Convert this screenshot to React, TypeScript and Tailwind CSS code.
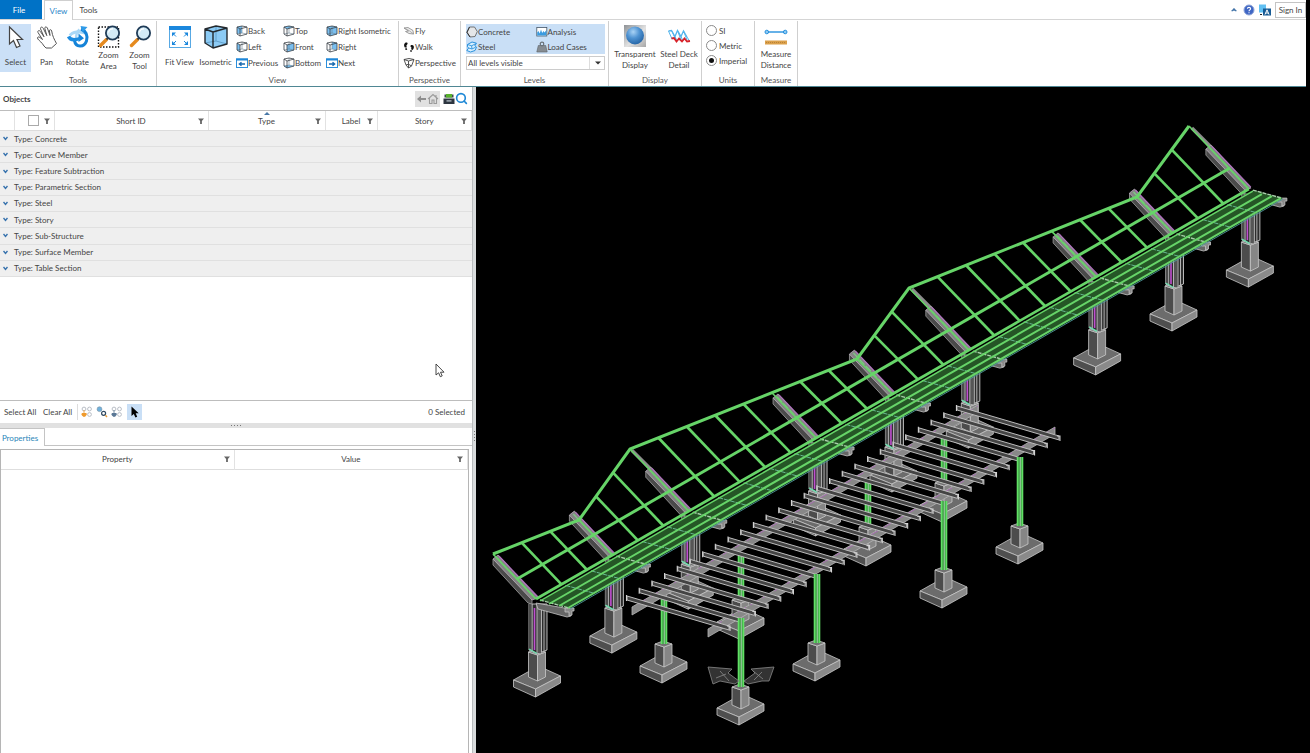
import React, { ReactNode } from 'react';
import { Search } from 'lucide-react';

type Pt = [number, number];

const pts = (list: Pt[]) => list.map((p) => p.join(',')).join(' ');

/* ---------- icons ---------- */

const cubeFaces: Record<string, string> = {
  back: '1,2 6,1 6,8 1,9',
  left: '1,2 4,4 4,11 1,9',
  top: '1,2 6,1 11,2 4,4',
  front: '4,4 11,2 11,9 4,11',
  bottom: '1,9 6,8 11,9 4,11',
  right: '6,1 11,2 11,9 6,8',
  iso: '1,2 6,1 11,2 11,9 4,11 1,9',
};

function Cube({ face }: { face: string }) {
  return (
    <svg width="12" height="12" viewBox="0 0 12 12" className="shrink-0">
      <polygon points={cubeFaces[face]} fill="#79bff0" />
      <path d="M1 9L6 8L11 9M6 8V1" fill="none" stroke="#6c8496" strokeWidth="0.6" />
      <path
        d="M1 2L6 1L11 2V9L4 11L1 9ZM1 2L4 4L11 2M4 4V11"
        fill="none"
        stroke="#3a4046"
        strokeWidth="0.8"
        strokeLinejoin="round"
      />
    </svg>
  );
}

const IsometricIcon = () => (
  <svg width="24" height="26" viewBox="0 0 24 26">
    <polygon points="1,5 12,2 23,4 23,20 9,24 1,19" fill="#8ccbf5" />
    <path d="M12 2V17M1 19L12 17L23 20" fill="none" stroke="#5f9cc6" strokeWidth="0.9" />
    <path
      d="M1 5L12 2L23 4V20L9 24L1 19ZM1 5L9 8L23 4M9 8V24"
      fill="none"
      stroke="#23292e"
      strokeWidth="1.4"
      strokeLinejoin="round"
    />
  </svg>
);

function WindowArrow({ flip = false }: { flip?: boolean }) {
  return (
    <svg width="12" height="12" viewBox="0 0 12 12" className="shrink-0">
      <rect x="0.5" y="2" width="11" height="8.5" fill="#fff" stroke="#2b8fdc" />
      <rect x="0" y="1.5" width="12" height="2" fill="#1d86d8" />
      <path
        d={flip ? 'M3 7H8M6.5 5.2L8.7 7L6.5 8.8' : 'M9 7H4M5.5 5.2L3.3 7L5.5 8.8'}
        fill="none"
        stroke="#1668b0"
        strokeWidth="1.3"
      />
    </svg>
  );
}

function Funnel() {
  return (
    <svg width="6" height="6" viewBox="0 0 6 6" className="shrink-0">
      <path d="M0 0.5H6L3.9 3V6H2.1V3Z" fill="#666" />
    </svg>
  );
}

function Magnifier({ area = false }: { area?: boolean }) {
  return (
    <svg width="24" height="24" viewBox="0 0 24 24">
      {area && <rect x="1.5" y="2" width="20" height="20" fill="none" stroke="#111" strokeWidth="1.4" strokeDasharray="1.5 1.5" />}
      <path d="M9.5 14.5L3.5 20.5" stroke="#e58a1f" strokeWidth="3.4" strokeLinecap="round" />
      <path d="M11.5 12.5L9.5 14.5" stroke="#444" strokeWidth="2" />
      <circle cx="15.5" cy="8" r="6.6" fill="#d3ebf7" stroke="#1f3b57" strokeWidth="1.8" />
      <path d="M11.5 7.5A4.2 4.2 0 0 1 16 3.8" stroke="#fff" strokeWidth="1.2" fill="none" />
    </svg>
  );
}

const SelectIcon = () => (
  <svg width="24" height="26" viewBox="0 0 24 26">
    <path d="M5.5 3V20L9.5 16.5L12.5 23.5L16 22L13 15.5H18.5Z" fill="#fff" stroke="#444" strokeWidth="1.2" />
  </svg>
);

const PanIcon = () => (
  <svg width="24" height="26" viewBox="0 0 24 26">
    <path
      d="M9 22C7 18.5 4.5 17 2.8 15C1.8 13 3.6 12.2 5 13.5L7.5 15.5L3 8.5C2.2 6.7 4.2 5.8 5.3 7.4L9 12.8L5.6 5C5 3 7.2 2.4 8.2 4.2L11.8 11.6L9.8 4.4C9.6 2.6 11.6 2.4 12.4 4L15 11.5L14.4 6.8C14.6 5.2 16.4 5.4 16.7 7C17.5 12 19 15 21.5 19.5L16.5 24H11Z"
      fill="#fff"
      stroke="#555"
      strokeWidth="1"
      strokeLinejoin="round"
    />
  </svg>
);

const RotateIcon = () => (
  <svg width="24" height="26" viewBox="0 0 24 26">
    <path d="M4 11.5C6 8 14 6.5 21 9.5" fill="none" stroke="#a9d8f7" strokeWidth="3" />
    <path d="M8.5 16.5C9.5 23.5 18 24 20.5 17C22.2 12 20 7 15 5" fill="none" stroke="#1583d8" strokeWidth="3" />
    <path d="M10 15C10 10 11 7.5 13.5 5.5" fill="none" stroke="#a9d8f7" strokeWidth="2.4" />
    <path d="M12.5 9.5V18L18 14.2Z" fill="#1583d8" />
    <path d="M14.5 2L21.5 3L16.5 8.5Z" fill="#2f9be8" />
    <path d="M2.5 12.5C4 16 8 16.5 14 14.5" fill="none" stroke="#1c8ce0" strokeWidth="3.4" />
  </svg>
);

const FitIcon = () => (
  <svg width="24" height="26" viewBox="0 0 24 26">
    <rect x="1.5" y="3.5" width="21" height="20" fill="#fff" stroke="#58a9e4" />
    <rect x="1" y="2" width="22" height="4" fill="#1a87dd" />
    <path d="M4 8.5H8L4 12.5ZM20 8.5H16L20 12.5ZM4 21H8L4 17ZM20 21H16L20 17Z" fill="#1a87dd" />
    <path d="M5 9.5L8 12.5M19 9.5L16 12.5M5 20L8 17M19 20L16 17" stroke="#1a87dd" strokeWidth="1" />
  </svg>
);

const FlyIcon = () => (
  <svg width="12" height="12" viewBox="0 0 12 12" className="shrink-0">
    <path d="M1 3L5 2.5L10 5.5L10.5 9L6 8.5L2.5 6.5L5.5 6Z" fill="#eee" stroke="#888" strokeWidth="0.8" />
    <path d="M1 3L6 5.5L10.5 9" fill="none" stroke="#999" strokeWidth="0.7" />
  </svg>
);

const WalkIcon = () => (
  <svg width="12" height="12" viewBox="0 0 12 12" className="shrink-0">
    <path d="M2 2C3.8 1 5 2 4.5 3L3.4 4.5L3.8 6.4L1.8 6.6C0.8 4.8 0.8 3 2 2ZM2 7.4L3.9 7.2L4.2 8.7L2.6 8.9Z" fill="#111" />
    <path d="M7.6 4.4C9.6 3.4 11.4 4.6 10.8 7L9.8 9L8 8.2C8.8 7 8.4 6 7.4 5.6ZM7.6 9L9.3 9.8L8.2 11L7 10.3Z" fill="#111" />
  </svg>
);

const PerspectiveIcon = () => (
  <svg width="12" height="12" viewBox="0 0 12 12" className="shrink-0">
    <path d="M1 2.5L6 1.5L11 2.5L8.5 9L5.5 11L3 8ZM1 2.5L5.5 4L11 2.5M5.5 4V11M3 8L5.5 7.2L8.5 9" fill="none" stroke="#444" strokeWidth="0.9" />
  </svg>
);

const ConcreteIcon = () => (
  <svg width="12" height="12" viewBox="0 0 12 12" className="shrink-0">
    <path d="M3.5 1L8.5 1L11.3 5.5L9 10.5L4 11L0.8 6.5Z" fill="#e4e6e8" stroke="#666" strokeWidth="0.9" />
    <path d="M3.5 1L1 6.2L4 11" fill="none" stroke="#333" strokeWidth="1" />
  </svg>
);

const SteelIcon = () => (
  <svg width="12" height="12" viewBox="0 0 12 12" className="shrink-0">
    <path d="M1.5 3.5L6 1L10.5 2.2L8.8 4.8L10.5 6L9 9.5L4.5 11L0.8 9.5L2.6 7L1.5 5.8Z" fill="#d9effd" stroke="#2a92dd" strokeWidth="1" />
    <path d="M1.5 3.5L5.6 4.8L10 2.6M2.6 7L6 8L9.6 6.2M5.6 4.8L6 8" fill="none" stroke="#2a92dd" strokeWidth="0.9" />
  </svg>
);

const AnalysisIcon = () => (
  <svg width="12" height="12" viewBox="0 0 12 12" className="shrink-0">
    <rect x="0.8" y="1.5" width="10" height="8.5" fill="#fff" stroke="#456" strokeWidth="0.8" />
    <path d="M1.2 9.6V6.5L2.5 5L3.7 7.5L5 3.5L6.2 7L7.5 5L8.6 6.5L10.4 4V9.6Z" fill="#3a9be0" />
  </svg>
);

const LoadIcon = () => (
  <svg width="12" height="12" viewBox="0 0 12 12" className="shrink-0">
    <path d="M2.3 4.5H9.7L11.2 11H0.8Z" fill="#868c92" stroke="#5b6268" strokeWidth="0.6" />
    <circle cx="6" cy="3" r="1.8" fill="none" stroke="#6b7278" strokeWidth="1.2" />
  </svg>
);

const SphereIcon = () => (
  <svg width="24" height="24" viewBox="0 0 24 24">
    <defs>
      <radialGradient id="ball" cx="0.4" cy="0.3" r="0.7">
        <stop offset="0" stopColor="#a9d3f5" />
        <stop offset="0.5" stopColor="#4f93d2" />
        <stop offset="1" stopColor="#2767a8" />
      </radialGradient>
      <linearGradient id="plate" x1="0" y1="0" x2="1" y2="1">
        <stop offset="0" stopColor="#8e9296" />
        <stop offset="0.55" stopColor="#e2e2e2" />
        <stop offset="1" stopColor="#a7a7a7" />
      </linearGradient>
    </defs>
    <rect x="1" y="1" width="22" height="22" fill="url(#plate)" />
    <circle cx="12" cy="11.5" r="9" fill="url(#ball)" />
  </svg>
);

const DeckIcon = () => (
  <svg width="24" height="24" viewBox="0 0 24 24">
    <path d="M1.5 7L4.5 6.5L8 12.5L10.5 6.5L14 12.5L16.5 7L20 13" fill="none" stroke="#55b5ec" strokeWidth="1.3" />
    <path d="M1.5 7L5 15M4.5 6.5L8.5 15M8 12.5L10 17M10.5 6.5L14 16M14 12.5L16 17M16.5 7L20 16M20 13L22.5 17" fill="none" stroke="#55b5ec" strokeWidth="1" />
    <path d="M4.5 14.5L7 14L9.5 17.5L12 14.5L15 17.5L17.5 14.5L20 17.5L23 17" fill="none" stroke="#d8232a" strokeWidth="1.8" />
  </svg>
);

const MeasureIcon = () => (
  <svg width="24" height="24" viewBox="0 0 24 24">
    <path d="M2.5 8H21.5" stroke="#2590de" strokeWidth="1.4" />
    <circle cx="2.8" cy="8" r="1.8" fill="#8fcaf3" stroke="#2590de" />
    <circle cx="21.2" cy="8" r="1.8" fill="#8fcaf3" stroke="#2590de" />
    <rect x="1" y="16.5" width="22" height="4" fill="#dba04b" />
    <path d="M2 18.5H22" stroke="#b98337" strokeDasharray="1 1" />
  </svg>
);

const BallsIcon = ({ accent }: { accent: string }) => (
  <svg width="12" height="12" viewBox="0 0 12 12">
    <circle cx="3" cy="3" r="1.9" fill="#fff" stroke="#b9bec6" />
    <circle cx="8.5" cy="3" r="1.9" fill="#fff" stroke="#b9bec6" />
    <circle cx="8.5" cy="8.5" r="1.9" fill="#fff" stroke="#b9bec6" />
    <path d="M1 7.5A2.2 2.2 0 1 0 5.2 7.5Z" fill={accent} stroke={accent} />
    <path d="M3 4V8" stroke={accent} strokeWidth="0.8" />
  </svg>
);

const LinkedIcon = () => (
  <svg width="12" height="12" viewBox="0 0 12 12">
    <circle cx="3.5" cy="3.2" r="2.4" fill="#6fb1dc" stroke="#7d98ad" strokeWidth="0.7" />
    <circle cx="7.6" cy="7.3" r="2" fill="#fff" stroke="#2f4a63" strokeWidth="1.2" />
    <path d="M9.4 9.2L11 11" stroke="#e39a3a" strokeWidth="1.4" />
  </svg>
);

/* ---------- ribbon ---------- */

function Group({ label, className, children }: { label: string; className: string; children: ReactNode }) {
  return (
    <section aria-label={label} className={`flex flex-col shrink-0 border-r border-[#cfcfcf] ${className}`}>
      <div className="flex flex-1">{children}</div>
      <div className="h-3 text-center leading-[12px] text-[#555]">{label}</div>
    </section>
  );
}

function BigButton({ icon, lines, active = false, className = 'w-[31px]' }: { icon: ReactNode; lines: string[]; active?: boolean; className?: string }) {
  return (
    <button className={`flex flex-col items-center h-12 ${className} ${active ? 'bg-[#cbe0f7]' : ''}`}>
      <span className="flex h-[26px] items-center justify-center">{icon}</span>
      <span className={`flex flex-1 flex-col justify-center text-center leading-[11px] whitespace-nowrap ${lines.length === 1 ? 'pt-[2px]' : ''}`}>
        {lines.map((l) => (
          <span key={l}>{l}</span>
        ))}
      </span>
    </button>
  );
}

function SmallButton({ icon, label, className = 'h-4' }: { icon: ReactNode; label: string; className?: string }) {
  return (
    <button className={`flex items-center whitespace-nowrap ${className}`}>
      {icon}
      <span>{label}</span>
    </button>
  );
}

function Ribbon() {
  return (
    <header className="bg-white mr-1 border-b border-[#4f8794]">
      <div className="flex items-end h-5 border-b border-[#d5d5d5]">
        <button className="w-[42px] h-[19px] bg-[#0072c6] text-white pr-1">File</button>
        <button className="ml-[2px] -mb-px w-[29px] h-5 border border-b-0 border-[#cfcfcf] bg-white text-[#2a86c9]">View</button>
        <button className="w-[31px] h-[19px]">Tools</button>
        <div className="ml-auto flex items-center h-full">
          <button aria-label="Collapse ribbon">
            <svg width="6" height="5" viewBox="0 0 6 5"><path d="M0.5 4L3 1.2L5.5 4H4L3 3L2 4Z" fill="#3b6ea5" stroke="#3b6ea5" strokeWidth="0.5" /></svg>
          </button>
          <button aria-label="Help" className="ml-[6px]">
            <svg width="12" height="12" viewBox="0 0 12 12">
              <circle cx="6" cy="6" r="5" fill="#3f66c4" stroke="#8fa5d8" />
              <path d="M4.4 4.8C4.4 2.9 7.6 2.9 7.6 4.8C7.6 5.8 6 5.9 6 7.2M6 8.2V9.2" fill="none" stroke="#fff" strokeWidth="1.1" />
            </svg>
          </button>
          <button aria-label="Language" className="ml-1">
            <svg width="12" height="12" viewBox="0 0 12 12">
              <rect x="0" y="0.5" width="7" height="8" fill="#62c0f2" />
              <rect x="4" y="4.5" width="8" height="7" fill="#175a94" />
              <path d="M6 10.5L8 5.8L10 10.5M6.8 9H9.2" fill="none" stroke="#fff" />
              <path d="M1 10.5H3" stroke="#222" />
            </svg>
          </button>
          <button className="ml-1 h-4 w-[31px] border border-[#c4c4c4] whitespace-nowrap">Sign In</button>
        </div>
      </div>

      <div className="flex h-[66px] pt-px">
        <Group label="Tools" className="w-[157px]">
          <div className="flex pt-[3px]">
            <BigButton icon={<SelectIcon />} lines={['Select']} active />
            <BigButton icon={<PanIcon />} lines={['Pan']} />
            <BigButton icon={<RotateIcon />} lines={['Rotate']} />
            <BigButton icon={<Magnifier area />} lines={['Zoom', 'Area']} />
            <BigButton icon={<Magnifier />} lines={['Zoom', 'Tool']} />
          </div>
        </Group>

        <Group label="View" className="w-[242px]">
          <div className="flex pl-[5px] pt-[3px]">
            <BigButton icon={<FitIcon />} lines={['Fit View']} className="w-[35px]" />
            <BigButton icon={<IsometricIcon />} lines={['Isometric']} className="w-[37px]" />
          </div>
          <div className="grid grid-cols-[47px_43px_66px] content-start pt-[2px] pl-[2px]">
            <SmallButton icon={<Cube face="back" />} label="Back" />
            <SmallButton icon={<Cube face="top" />} label="Top" />
            <SmallButton icon={<Cube face="iso" />} label="Right Isometric" />
            <SmallButton icon={<Cube face="left" />} label="Left" />
            <SmallButton icon={<Cube face="front" />} label="Front" />
            <SmallButton icon={<Cube face="right" />} label="Right" />
            <SmallButton icon={<WindowArrow />} label="Previous" />
            <SmallButton icon={<Cube face="bottom" />} label="Bottom" />
            <SmallButton icon={<WindowArrow flip />} label="Next" />
          </div>
        </Group>

        <Group label="Perspective" className="w-[62px]">
          <div className="flex flex-col pt-[2px] pl-1">
            <SmallButton icon={<FlyIcon />} label="Fly" />
            <SmallButton icon={<WalkIcon />} label="Walk" />
            <SmallButton icon={<PerspectiveIcon />} label="Perspective" />
          </div>
        </Group>

        <Group label="Levels" className="w-[148px]">
          <div className="flex flex-col flex-1 pl-[5px] pr-[3px] pt-[3px]">
            <div className="grid grid-cols-2 bg-[#c9dff6]">
              <SmallButton icon={<ConcreteIcon />} label="Concrete" className="h-[15px]" />
              <SmallButton icon={<AnalysisIcon />} label="Analysis" className="h-[15px]" />
              <SmallButton icon={<SteelIcon />} label="Steel" className="h-[15px]" />
              <SmallButton icon={<LoadIcon />} label="Load Cases" className="h-[15px]" />
            </div>
            <div className="grid mt-[2px]">
              <select aria-label="Visible levels" className="col-start-1 row-start-1 h-[14px] appearance-none border border-[#cccccc] bg-white pl-px">
                <option>All levels visible</option>
              </select>
              <span className="col-start-1 row-start-1 justify-self-end flex items-center justify-center w-4 my-px border-l border-[#ddd] pointer-events-none">
                <svg width="6" height="4" viewBox="0 0 6 4"><path d="M0 0.5H6L3 3.5Z" fill="#333" /></svg>
              </span>
            </div>
          </div>
        </Group>

        <Group label="Display" className="w-[93px]">
          <div className="flex pt-[2px] pl-[3px]">
            <BigButton icon={<SphereIcon />} lines={['Transparent', 'Display']} className="w-[46px]" />
            <BigButton icon={<DeckIcon />} lines={['Steel Deck', 'Detail']} className="w-[42px]" />
          </div>
        </Group>

        <Group label="Units" className="w-[53px]">
          <div className="flex flex-col pl-1 pt-[2px]">
            {['SI', 'Metric', 'Imperial'].map((u) => (
              <label key={u} className="flex items-center gap-[2px] h-[15px]">
                <input
                  type="radio"
                  name="units"
                  defaultChecked={u === 'Imperial'}
                  className="appearance-none w-[11px] h-[11px] rounded-full border border-[#8a8a8a] bg-white p-[2px] bg-clip-content checked:bg-[#111]"
                />
                {u}
              </label>
            ))}
          </div>
        </Group>

        <Group label="Measure" className="w-[43px]">
          <div className="flex pt-[2px]">
            <BigButton icon={<MeasureIcon />} lines={['Measure', 'Distance']} className="w-[42px]" />
          </div>
        </Group>
      </div>
    </header>
  );
}

/* ---------- left side ---------- */

const objectTypes = [
  'Concrete',
  'Curve Member',
  'Feature Subtraction',
  'Parametric Section',
  'Steel',
  'Story',
  'Sub-Structure',
  'Surface Member',
  'Table Section',
];

function HeadCell({ label, sorted = false }: { label: string; sorted?: boolean }) {
  return (
    <th className="relative border-r border-[#e2e2e2] font-normal p-0">
      {sorted && (
        <svg width="6" height="3" viewBox="0 0 6 3" className="absolute top-px left-1/2 -ml-[3px]">
          <path d="M0 3L3 0L6 3Z" fill="#4878a8" />
        </svg>
      )}
      <div className="flex items-center pl-[10px] pr-1">
        <span className="flex-1 text-center">{label}</span>
        <Funnel />
      </div>
    </th>
  );
}

function ObjectsPanel() {
  return (
    <section className="flex flex-col h-[336px] shrink-0 bg-white">
      <div className="flex items-center justify-between h-6 pl-[3px] pr-1 border-b border-[#bdbdbd]">
        <h2 className="font-bold text-[#444]">Objects</h2>
        <div className="flex items-center">
          <div className="flex items-center bg-[#e1e1e1] h-4 px-px">
            <button aria-label="Back">
              <svg width="11" height="10" viewBox="0 0 11 10"><path d="M1 5L5 1.5V4H10V6H5V8.5Z" fill="#8e8e8e" /></svg>
            </button>
            <button aria-label="Home">
              <svg width="12" height="12" viewBox="0 0 12 12"><path d="M1 6L6 1.5L11 6M2.5 5V10.5H5V7H7V10.5H9.5V5M9 2V4" fill="none" stroke="#9b9b9b" strokeWidth="1.1" /></svg>
            </button>
          </div>
          <button aria-label="Show in list" className="ml-[3px]">
            <svg width="12" height="12" viewBox="0 0 12 12">
              <path d="M1.5 1.5H10.5V4.5H1.5Z" fill="#3c4750" />
              <rect x="3" y="1" width="6" height="3.5" fill="#58b32c" />
              <rect x="0.5" y="5.5" width="11" height="5.5" fill="#2d3540" />
              <rect x="3.5" y="7.2" width="5" height="1.4" fill="#aab4bc" />
            </svg>
          </button>
          <button aria-label="Search">
            <Search size={13} strokeWidth={3} className="text-[#1e88d6]" />
          </button>
        </div>
      </div>

      <table className="table-fixed w-full">
        <colgroup>
          <col className="w-[14px]" />
          <col className="w-10" />
          <col className="w-[154px]" />
          <col className="w-[117px]" />
          <col className="w-[52px]" />
          <col />
        </colgroup>
        <thead>
          <tr className="h-[19px]">
            <th className="border-r border-[#e2e2e2]" />
            <th className="border-r border-[#e2e2e2] p-0">
              <div className="flex items-center justify-between pl-[13px] pr-1">
                <input type="checkbox" aria-label="Select all rows" className="appearance-none w-[11px] h-[11px] border border-[#aaa] bg-white" />
                <Funnel />
              </div>
            </th>
            <HeadCell label="Short ID" />
            <HeadCell label="Type" sorted />
            <HeadCell label="Label" />
            <HeadCell label="Story" />
          </tr>
        </thead>
      </table>
      <table className="w-full h-[147px] bg-[#efefef] border-t border-[#dcdcdc]">
        <tbody>
          {objectTypes.map((t) => (
            <tr key={t} className="border-b border-[#e0e0e0]">
              <td className="p-0 align-middle">
                <button className="flex items-center gap-[6px] pl-[3px] leading-[12px]">
                  <svg width="5" height="5" viewBox="0 0 5 5"><path d="M0.5 1L2.5 3.5L4.5 1" fill="none" stroke="#3571ad" strokeWidth="1.4" /></svg>
                  Type: {t}
                </button>
              </td>
            </tr>
          ))}
        </tbody>
      </table>

      <div className="mt-auto flex items-center h-[23px] border-t border-[#bdbdbd] pl-1 pr-[7px]">
        <button className="w-[33px] text-left whitespace-nowrap">Select All</button>
        <button className="ml-[6px] w-[30px] text-left whitespace-nowrap">Clear All</button>
        <div className="flex items-center gap-[3px] ml-1 border-l border-[#ddd] pl-[3px] h-4">
          <button aria-label="Select below"><BallsIcon accent="#ef9a2d" /></button>
          <button aria-label="Select linked"><LinkedIcon /></button>
          <button aria-label="Select group"><BallsIcon accent="#5b7896" /></button>
        </div>
        <button aria-label="Pick mode" className="flex items-center justify-center ml-1 w-[15px] h-4 bg-[#c9dff6]">
          <svg width="10" height="12" viewBox="0 0 10 12"><path d="M1.5 0.5V10L3.8 8L5.4 11.5L7.2 10.7L5.7 7.3H8.7Z" fill="#000" /></svg>
        </button>
        <span className="ml-auto">0 Selected</span>
      </div>
    </section>
  );
}

function PropertiesPanel() {
  return (
    <section className="flex flex-col flex-1 bg-white">
      <div className="flex h-[18px] border-b border-[#c4c4c4]">
        <button className="-mb-px h-[18px] w-[45px] border-r border-t border-[#c4c4c4] bg-white pr-1 text-[#2a86b9]">Properties</button>
      </div>
      <div className="flex-1 mt-[3px] mr-[3px] border border-b-0 border-[#b5b5b5]">
        <table className="table-fixed w-full">
          <thead>
            <tr className="h-[19px] border-b border-[#dedede]">
              <HeadCell label="Property" />
              <HeadCell label="Value" />
            </tr>
          </thead>
        </table>
      </div>
    </section>
  );
}

/* ---------- model ---------- */

const STEP_X = 25.46;
const STEP_Y = -14.64;
const STEPS = 28;
const FRAMES = [0, 3, 6, 11, 14, 17, 22, 25, 28];
const PEAKS = [6, 17, 28];
const GREEN = '#66d468';
const EDGE = '#c9c9c9';

const along = (i: number, dx = 0, dy = 0): Pt => [536 + i * STEP_X + dx, 599 + i * STEP_Y + dy];

// upper edge of the canopy, as [step, x, y]
const ROOF: [number, number, number][] = [
  [0, 493, 554],
  [3, 579, 520],
  [6, 630, 449],
  [14, 857, 359],
  [17, 909, 288],
  [25, 1137, 197],
  [28, 1189, 126],
];

function roofAt(i: number): Pt {
  for (let k = 1; k < ROOF.length; k++) {
    const [s0, x0, y0] = ROOF[k - 1];
    const [s1, x1, y1] = ROOF[k];
    if (i <= s1) {
      const t = (i - s0) / (s1 - s0);
      return [x0 + (x1 - x0) * t, y0 + (y1 - y0) * t];
    }
  }
  return [1189, 126];
}

function Seg({ a, b, color = GREEN, w = 2, dash }: { a: Pt; b: Pt; color?: string; w?: number; dash?: string }) {
  return <line x1={a[0]} y1={a[1]} x2={b[0]} y2={b[1]} stroke={color} strokeWidth={w} strokeDasharray={dash} />;
}

// (x, y) is the left corner of the pad's upper face
function Footing({ x, y, rise }: { x: number; y: number; rise: number }) {
  return (
    <g transform={`translate(${x} ${y})`} stroke={EDGE} strokeWidth="0.8" strokeLinejoin="round">
      <polygon points="0,0 25,-14 47,-4 22,9" fill="#6c6c6c" />
      <polygon points="0,0 22,9 22,17 0,7" fill="#4f4f4f" />
      <polygon points="22,9 47,-4 47,3 22,17" fill="#8a8a8a" />
      <polygon points={`15,${-rise} 24,${3 - rise} 24,1 15,-3`} fill="#4c4c4c" />
      <polygon points={`24,${3 - rise} 32,${-rise} 32,-3 24,1`} fill="#868686" />
      <polygon points={`15,${-rise} 23,${-3 - rise} 32,${-rise} 24,${3 - rise}`} fill="#717171" />
    </g>
  );
}

function Column({ i }: { i: number }) {
  const [x, y] = along(i);
  return (
    <g>
      <Footing x={x - 22.5} y={y + 81} rise={28} />
      <g transform={`translate(${x} ${y})`}>
        <polygon points="-7,5 11,5 11,51 6,53 1,55 -7,51" fill="#2c2c2c" stroke={EDGE} strokeWidth="0.9" />
        <rect x="-7" y="5" width="3" height="46" fill="#4c4c4c" />
        <rect x="1" y="5" width="4" height="49" fill="#555" />
        <path d="M-3.8 5V52M1 5V55M5.5 5V53M8 5V52" stroke="#c2c2c2" strokeWidth="0.9" />
        <path d="M-1.5 9V51" stroke="#c04fd0" strokeWidth="1.6" />
        <path d="M-7 50L1 54.5" stroke="#6fe0b0" strokeWidth="1.4" />
      </g>
    </g>
  );
}

function Rafter({ i }: { i: number }) {
  const [x, y] = along(i);
  return (
    <g>
      {PEAKS.includes(i) && <Seg a={[x - 57, y - 61]} b={[x - 38, y - 42]} color="#8c8c8c" w={3.6} />}
      <g transform={`translate(${x} ${y})`}>
        <polygon points="-43,-40 -43,-34 -8,4 -4,5 -4,0" fill="#4a4a4a" stroke="#a0a0a0" strokeWidth="0.8" />
        <polygon points="-43,-40 -38,-44 2,-1 -4,1" fill="#858585" stroke="#b5a9b8" strokeWidth="0.8" />
        <path d="M-37 -43L2 -2" stroke="#b56fc4" strokeWidth="1.1" />
        <path d="M-39 -41L-1 -1" stroke="#7ccf85" strokeWidth="1.2" strokeDasharray="7 2" />
      </g>
    </g>
  );
}

function Bracket({ i }: { i: number }) {
  const [x, y] = along(i);
  return (
    <g transform={`translate(${x} ${y})`} stroke="#c4c4c4" strokeWidth="0.8">
      <polygon points="0,4 34,10 35,17 31,18 2,10" fill="#666" />
      <polygon points="29,9 38,9 38,12 36,12 36,16 33,17 33,13 29,13" fill="#8a8a8a" />
    </g>
  );
}

function Deck() {
  const steps = Array.from({ length: STEPS + 1 }, (_, i) => i);
  return (
    <g>
      <polygon points={pts([along(0, 4, 1), along(STEPS, 4, 1), along(STEPS, 34, 9), along(0, 34, 9)])} fill="#255626" />
      {steps.map((i) =>
        FRAMES.includes(i) ? (
          <Seg key={i} a={along(i, 4, 1)} b={along(i, 33, 9)} color="#a9cfab" w={1.4} dash="4 1" />
        ) : (
          <Seg key={i} a={along(i, 4, 1)} b={along(i, 33, 9)} color="#67b793" w={1} dash="5 1" />
        ),
      )}
      <Seg a={along(0, 4, 2)} b={along(STEPS, 4, 2)} w={1.4} />
      <Seg a={along(0, 13, 5)} b={along(STEPS, 13, 5)} w={2} />
      <Seg a={along(0, 23, 7)} b={along(STEPS, 23, 7)} w={2} />
      <Seg a={along(0, 32, 9)} b={along(STEPS, 32, 9)} w={2} />
      <Seg a={along(0, 34, 10)} b={along(STEPS, 34, 10)} color="#4f9a9c" w={0.9} />
      <Seg a={along(0)} b={along(STEPS)} w={2.8} />
    </g>
  );
}

function Canopy() {
  const ribs = Array.from({ length: STEPS + 1 }, (_, i) => i);
  return (
    <g>
      {ribs.map((i) => (
        <Seg key={i} a={roofAt(i)} b={along(i)} w={FRAMES.includes(i) ? 1.6 : 2.7} />
      ))}
      <polyline points={pts(ROOF.map(([, x, y]) => [x, y] as Pt))} fill="none" stroke={GREEN} strokeWidth="3" />
      <Seg a={[517, 579]} b={[1230, 168]} w={3} />
    </g>
  );
}

function Post({ x, top, bottom }: { x: number; top: number; bottom: number }) {
  return (
    <g>
      <rect x={x - 3} y={top} width="6" height={bottom - top} fill="#3fa545" />
      <path d={`M${x - 2.5} ${top}V${bottom}M${x + 2.5} ${top}V${bottom}`} stroke="#62e066" strokeWidth="1.6" />
      <path d={`M${x + 0.3} ${top}V${bottom}`} stroke="#a9c9ad" strokeWidth="0.9" />
    </g>
  );
}

function Girder({ a, b }: { a: Pt; b: Pt }) {
  return (
    <g>
      <polygon points={pts([[a[0], a[1] - 3], [b[0], b[1] - 4], [b[0], b[1] + 3], [a[0], a[1] + 5]])} fill="#888" stroke="#b5b5b5" strokeWidth="0.8" />
      <Seg a={[a[0] + 6, a[1] - 6]} b={[b[0], b[1] - 3]} color="#a66cb0" w={1} dash="9 5" />
    </g>
  );
}

const REAR_POSTS = [
  { x: 664, y: 666 },
  { x: 741, y: 622 },
  { x: 868, y: 549 },
  { x: 944, y: 505 },
];

const FRONT_POSTS = [
  { x: 741, y: 708 },
  { x: 817, y: 664 },
  { x: 944, y: 591 },
  { x: 1020, y: 547 },
];

function LowerFrame() {
  const joists = Array.from({ length: 27 }, (_, i) => 26 - i);
  return (
    <g>
      {REAR_POSTS.slice().reverse().map((p) => (
        <g key={p.x}>
          <Footing x={p.x - 24} y={p.y} rise={22} />
          <Post x={p.x} top={p.y - 68} bottom={p.y - 22} />
        </g>
      ))}
      <Girder a={[632, 610]} b={[978, 409]} />
      <Girder a={[708, 632]} b={[1055, 431]} />
      {joists.map((i) => {
        const x = 627 + i * 12.69;
        const y = 598 - i * 7.31;
        return (
          <g key={i}>
            <polygon
              points={pts([[x, y - 2], [x + 102, y + 28], [x + 102, y + 32], [x, y + 2]])}
              fill="#444"
              stroke="#bcbcbc"
              strokeWidth="1"
            />
            <path d={`M${x - 0.5} ${y - 3}V${y + 3}M${x + 100} ${y + 28}H${x + 103}V${y + 33}`} stroke="#d5d5d5" strokeWidth="1.1" fill="none" />
          </g>
        );
      })}
      {FRONT_POSTS.slice().reverse().map((p) => (
        <g key={p.x}>
          <Footing x={p.x - 24} y={p.y} rise={21} />
          <Post x={p.x} top={p.y - 90} bottom={p.y - 21} />
        </g>
      ))}
    </g>
  );
}

function AxisArrows() {
  return (
    <g fill="#555" fillOpacity="0.6" stroke="#8a8a8a" strokeWidth="0.8">
      <polygon points="708,667 732,669 728,673 739,681 735,684 720,681 713,684" />
      <polygon points="774,667 751,669 755,673 744,681 748,684 762,681 769,681" />
      <path d="M716 678L726 674M720 671L729 681M753 671L763 679M762 672L754 680" fill="none" />
    </g>
  );
}

function Viewport() {
  return (
    <main className="flex-1 min-w-0 min-h-0 bg-black">
      <svg viewBox="476 87 834 666" className="block w-full h-full" role="img" aria-label="Structural model">
        {FRAMES.slice().reverse().map((i) => (
          <Column key={i} i={i} />
        ))}
        {FRAMES.map((i) => (
          <Bracket key={i} i={i} />
        ))}
        {FRAMES.map((i) => (
          <Rafter key={i} i={i} />
        ))}
        <Deck />
        <Canopy />
        <LowerFrame />
        <AxisArrows />
      </svg>
    </main>
  );
}

export default function App() {
  return (
    <div className="flex flex-col h-screen bg-black text-[8px] leading-[12px] text-[#444] font-['Lato','Noto_Sans',sans-serif]">
      <Ribbon />
      <div className="flex flex-1 min-h-0">
        <aside className="relative flex flex-col w-[472px] shrink-0 bg-white">
          <ObjectsPanel />
          <div className="flex items-center justify-center gap-[2px] h-[5px] shrink-0 bg-[#e1e1e1]">
            {[0, 1, 2, 3].map((n) => (
              <span key={n} className="w-px h-px bg-[#777]" />
            ))}
          </div>
          <PropertiesPanel />
          <svg width="10" height="15" viewBox="0 0 10 15" className="absolute left-[435px] top-[276px]">
            <path d="M1 1V12L3.6 9.8L5.3 13.7L7.2 12.9L5.5 9.2H9Z" fill="#fff" stroke="#333" strokeWidth="0.9" />
          </svg>
        </aside>
        <div className="flex flex-col items-center gap-[2px] w-1 shrink-0 bg-[#d9dcdd] border-l border-[#b9bcbe] pt-[344px]">
          {[0, 1, 2, 3].map((n) => (
            <span key={n} className="w-px h-px bg-[#777]" />
          ))}
        </div>
        <Viewport />
      </div>
    </div>
  );
}
